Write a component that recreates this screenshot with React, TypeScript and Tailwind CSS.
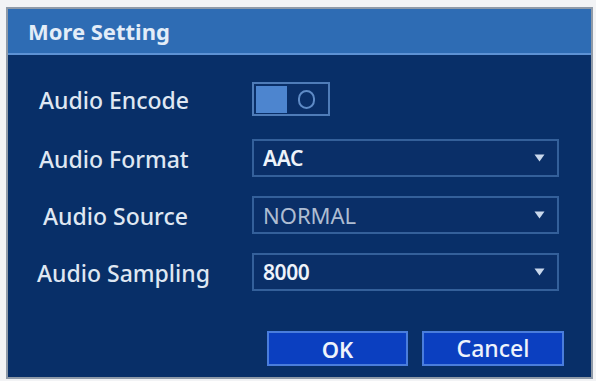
import { FC } from 'react';

const font = { fontFamily: '"Noto Sans", "Open Sans", Arial, sans-serif' };

const Arrow: FC = () => (
  <svg width="11" height="8" viewBox="0 0 11 8" className="shrink-0">
    <path d="M0.5 0.5h10L5.5 7.5z" fill="#c9d8ec" />
  </svg>
);

const Select: FC<{ value: string; dim?: boolean }> = ({ value, dim }) => (
  <div className="flex h-[38px] w-[307px] items-center justify-between border-2 border-[#34609a] bg-[#0a2f68] pl-[9px] pr-[12px]">
    <span
      className={`leading-none ${dim ? 'text-[22px] font-normal text-[#aebdd2]' : 'text-[21px] font-semibold tracking-[-0.02em] text-[#eef3fa]'}`}
    >
      {value}
    </span>
    <Arrow />
  </div>
);

const Row: FC<{ label: string; indent: string; children: React.ReactNode; className?: string }> = ({
  label,
  indent,
  children,
  className,
}) => (
  <div className={`flex items-center ${className ?? ''}`}>
    <div className={`w-[244px] ${indent} pt-[2px] text-[23px] leading-none font-medium text-[#dfe7f2]`}>{label}</div>
    {children}
  </div>
);

export default function App() {
  return (
    <div className="h-[381px] w-[596px] overflow-hidden bg-[#f2f3f5] pl-[6px] pt-[7px]" style={font}>
      <div className="flex h-[372px] w-[587px] flex-col border-2 border-[#8f9aa8] bg-[#082f68]">
        <div className="flex h-[46px] items-center border-b-2 border-[#5d92d4] bg-[#2e6cb4] pl-[20px]">
          <span className="text-[22px] font-bold text-[#e3edf8]">More Setting</span>
        </div>

        <div className="flex flex-col pt-[27px]">
          <Row label="Audio Encode" indent="pl-[31px]">
            <div className="flex h-[34px] w-[78px] items-center border-2 border-[#4f7cb8] bg-[#0a2f68] p-[2px]">
              <div className="h-[27px] w-[31px] bg-[#4d85cf]" />
              <div className="flex flex-1 items-center justify-center">
                <div className="h-[19px] w-[17px] rounded-full border-2 border-[#5f8bc6]" />
              </div>
            </div>
          </Row>

          <Row label="Audio Format" indent="pl-[31px]" className="mt-[23px]">
            <Select value="AAC" />
          </Row>

          <Row label="Audio Source" indent="pl-[35px]" className="mt-[19px]">
            <Select value="NORMAL" dim />
          </Row>

          <Row label="Audio Sampling" indent="pl-[29px]" className="mt-[19px]">
            <Select value="8000" />
          </Row>

          <div className="mt-[40px] flex gap-[14px] pl-[259px]">
            <button className="h-[35px] w-[141px] border-2 border-[#4a7ddc] bg-[#0b3fc0] text-[22px] leading-none font-semibold text-[#eef3fb]">
              OK
            </button>
            <button className="h-[35px] w-[142px] border-2 border-[#4a7ddc] bg-[#0b3fc0] text-[23px] leading-none font-medium text-[#eef3fb]">
              Cancel
            </button>
          </div>
        </div>
      </div>
    </div>
  );
}
